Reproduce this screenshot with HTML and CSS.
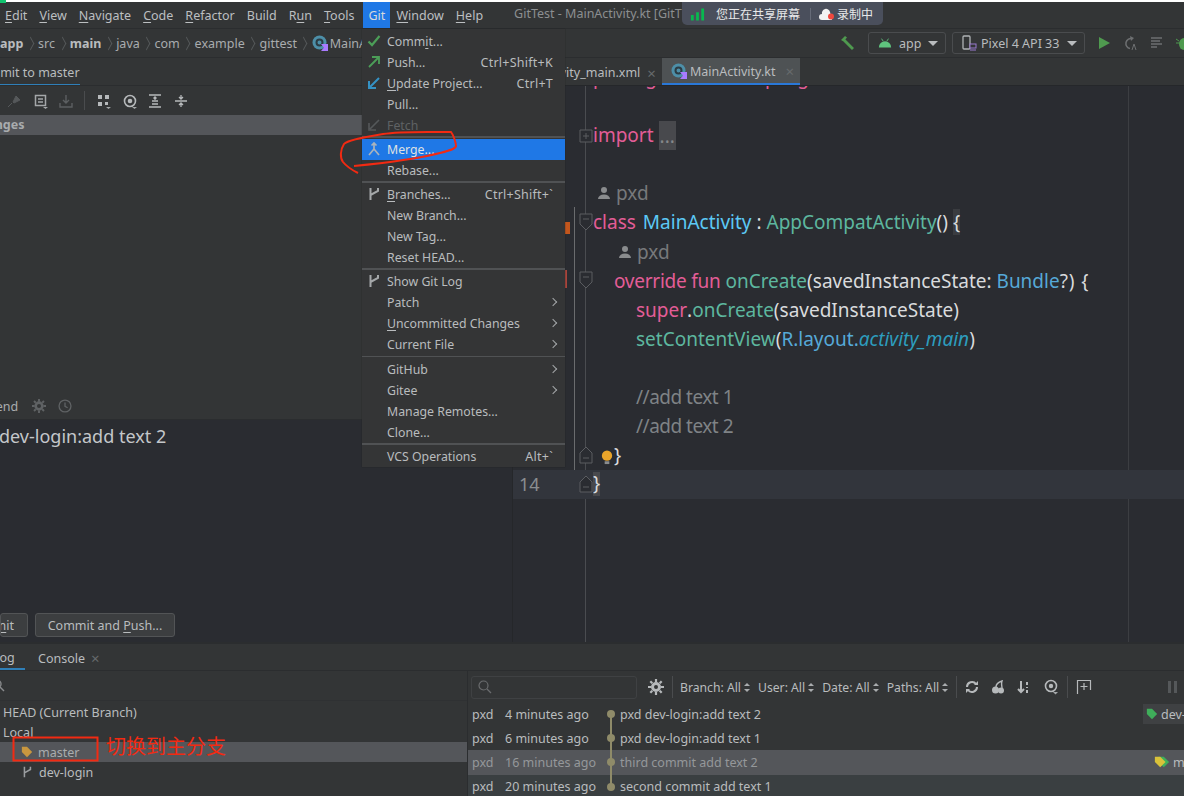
FILE: index.html
```html
<!DOCTYPE html>
<html lang="zh">
<head>
<meta charset="utf-8">
<title>GitTest - MainActivity.kt</title>
<link rel="stylesheet" href="styles.css">
</head>
<body>
<div class="app">
  <div class="topline"><span class="topmark"></span></div>
  <div class="menubar">
    <span class="mi first"><u>E</u>dit</span><span class="mi"><u>V</u>iew</span><span class="mi"><u>N</u>avigate</span><span class="mi"><u>C</u>ode</span><span class="mi"><u>R</u>efactor</span><span class="mi">Build</span><span class="mi">R<u>u</u>n</span><span class="mi"><u>T</u>ools</span><span class="mi git">Git</span><span class="mi"><u>W</u>indow</span><span class="mi"><u>H</u>elp</span>
    <span class="wintitle">GitTest - MainActivity.kt [GitT</span>
  </div>
  <div class="crumbs">
    <div class="crumbtrail">
      <b class="cb">app</b><i class="chev"></i><span class="cb">src</span><i class="chev"></i><b class="cb">main</b><i class="chev"></i><span class="cb">java</span><i class="chev"></i><span class="cb">com</span><i class="chev"></i><span class="cb">example</span><i class="chev"></i><span class="cb">gittest</span><i class="chev"></i>
      <svg class="ic16" viewBox="0 0 16 16"><circle cx="7.5" cy="7.5" r="7" fill="#4d8fa8"/><circle cx="7.5" cy="7.5" r="3" fill="none" stroke="#2c3c44" stroke-width="2"/><path d="M9 9h7v7H9l3-3.500z" fill="#a97bff"/></svg>
      <span class="cb">MainActivity</span>
    </div>
    <div class="runbar">
      <svg class="ic16" viewBox="0 0 16 16"><path d="M1 5 5 1l2 1.500-3.500 4zM5 4l9 9-2 2-9-9z" fill="#4f9a4f"/></svg>
      <div class="combo app-combo">
        <svg class="ic14" viewBox="0 0 16 12"><path d="M1 11a7 7 0 0 1 14 0z" fill="#5fc47e"/><path d="M4 1l2 3M12 1l-2 3" stroke="#5fc47e"/></svg>
        <span>app</span><i class="caret"></i>
      </div>
      <div class="combo pixel-combo">
        <svg class="ic16" viewBox="0 0 16 16"><rect x="2" y="1" width="7" height="13" rx="1" fill="none" stroke="#b0b3b5" stroke-width="1.300"/><rect x="9" y="9" width="6" height="4" fill="#333536" stroke="#9a7bcf"/><path d="M9 15h6" stroke="#9a7bcf"/></svg>
        <span>Pixel 4 API 33</span><i class="caret"></i>
      </div>
      <svg class="ic14 play" viewBox="0 0 14 14"><path d="M2 1l11 6-11 6z" fill="#4f9a4f"/></svg>
      <svg class="ic16" viewBox="0 0 16 16"><path d="M10 3.500a5 5 0 1 0-2 10" fill="none" stroke="#6d6f71" stroke-width="1.500"/><path d="M8 1l4 2-3 3z" fill="#6d6f71"/><path d="M10 15l2-6 2 6" stroke="#6d6f71" fill="none"/></svg>
      <svg class="ic16" viewBox="0 0 16 16"><path d="M2 3h11M2 6h9M2 9h11M2 12h6" stroke="#6d6f71" stroke-width="1.300"/></svg>
      <svg class="ic16" viewBox="0 0 16 16"><ellipse cx="8" cy="9" rx="5" ry="6" fill="#4f9a4f"/><path d="M0 8h16M0 4l3 2M16 4l-3 2" stroke="#4f9a4f"/></svg>
    </div>
  </div>

  <div class="main">
    <section class="left">
      <div class="lefttabs"><span class="lefttab"><span class="cliptab">Commit to master</span></span></div>
      <div class="lefttools">
        <svg class="ic16" viewBox="0 0 16 16"><path d="M1 14l4-4M6 9l3-6 4 4-6 3z" fill="#55585a" stroke="#55585a"/></svg>
        <svg class="ic16" viewBox="0 0 16 16"><path d="M2.500 2.500h10v10h-10zM5 6h5M5 9h5" fill="none" stroke="#a4a7a9" stroke-width="1.500"/><path d="M10 14h5l-2.500 2z" fill="#a4a7a9"/></svg>
        <svg class="ic16" viewBox="0 0 16 16"><path d="M8 2v8M5 7l3 3 3-3M2 10v4h12v-4" fill="none" stroke="#5c5f61" stroke-width="1.400"/></svg>
        <i class="vsep"></i>
        <svg class="ic16" viewBox="0 0 16 16"><path d="M2 2h4v4H2zM9 2h4v4H9zM2 9h4v4H2zM9 9h3v3H9z" fill="#b6b9bb"/><path d="M10 14h5l-2.500 2z" fill="#a4a7a9"/></svg>
        <svg class="ic16" viewBox="0 0 16 16"><circle cx="8" cy="8" r="5.500" fill="none" stroke="#b6b9bb" stroke-width="1.600"/><circle cx="8" cy="8" r="2.300" fill="#b6b9bb"/><path d="M10 14h5l-2.500 2z" fill="#a4a7a9"/></svg>
        <svg class="ic16" viewBox="0 0 16 16"><path d="M2 2h12M2 14h12M5 11h6M5 8h6M8 4v3M6.500 5.500 8 4l1.500 1.500" fill="none" stroke="#b6b9bb" stroke-width="1.300"/></svg>
        <svg class="ic16" viewBox="0 0 16 16"><path d="M2 8h12M8 2v3.500M6 4l2 2 2-2M8 14v-3.500M6 12l2-2 2 2" fill="none" stroke="#b6b9bb" stroke-width="1.300"/></svg>
      </div>
      <div class="section-row"><span class="clip-ch">Changes</span></div>
      <div class="leftfill"></div>
      <div class="amend">
        <span class="clip-am">Amend</span>
        <svg class="ic14" viewBox="0 0 16 16"><circle cx="8" cy="8" r="3.800" fill="none" stroke="#5f6264" stroke-width="3"/><path d="M8 0v3M8 13v3M0 8h3M13 8h3M2.300 2.300l2 2M11.700 11.700l2 2M13.700 2.300l-2 2M4.300 11.700l-2 2" stroke="#5f6264" stroke-width="2.200"/></svg>
        <svg class="ic14" viewBox="0 0 16 16"><circle cx="8" cy="8" r="6.800" fill="none" stroke="#5f6264" stroke-width="1.500"/><path d="M8 4v4.500l3 1.500" fill="none" stroke="#5f6264" stroke-width="1.500"/></svg>
      </div>
      <div class="message">
        <p class="msgtext">dev-login:add text 2</p>
        <div class="btnrow">
          <button class="btn btn-cut"><span class="cutlabel">Com<u>m</u>it</span></button>
          <button class="btn btn-push">Commit and <u>P</u>ush...</button>
        </div>
      </div>
    </section>

    <section class="editor">
      <div class="edtabs">
        <span class="edtab">activity_main.xml<i class="x">×</i></span>
        <span class="edtab active">
          <svg class="ic16" viewBox="0 0 16 16"><circle cx="7.500" cy="7.500" r="7" fill="#4d8fa8"/><circle cx="7.500" cy="7.500" r="3" fill="none" stroke="#2c3c44" stroke-width="2"/><path d="M9 9h7v7H9l3-3.500z" fill="#a97bff"/></svg>
          MainActivity.kt<i class="x">×</i></span>
      </div>
      <div class="code">
        <div class="margin-line"></div>
        <div class="gutter-line g1"></div>
        <div class="gutter-line g2"></div>
        <div class="marker orange"></div>
        <div class="marker red"></div>
        <div class="rows">
        <div class="row"><span class="ln"></span><span class="kw">package com.example.gittest</span></div>
        <div class="row"></div>
        <div class="row"><span class="ln"><svg class="fold plus" viewBox="0 0 14 14"><path d="M1 1h12v12H1zM4 7h6M7 4v6" fill="#2a2c31" stroke="#5a5c60"/></svg></span><span class="kw">import</span> <span class="collapsed">...</span></div>
        <div class="row"></div>
        <div class="row hint"><span class="ln"></span><svg class="person" viewBox="0 0 14 14"><circle cx="7" cy="4" r="3" fill="#8a8c8e"/><path d="M1 13a6 4.500 0 0 1 12 0z" fill="#8a8c8e"/></svg>pxd</div>
        <div class="row"><span class="ln"><svg class="fold" viewBox="0 0 14 18"><path d="M1 1h12v10l-6 6-6-6zM4 6h6" fill="#2a2c31" stroke="#5a5c60"/></svg></span><span class="kw">class</span>&nbsp;<span class="cls">MainActivity</span><span class="pun">&nbsp;:&nbsp;</span><span class="sup">AppCompatActivity</span><span class="pun">()&nbsp;</span><span class="brace">{</span></div>
        <div class="row hint in1"><span class="ln"></span><svg class="person" viewBox="0 0 14 14"><circle cx="7" cy="4" r="3" fill="#8a8c8e"/><path d="M1 13a6 4.500 0 0 1 12 0z" fill="#8a8c8e"/></svg>pxd</div>
        <div class="row"><span class="ln"><svg class="fold" viewBox="0 0 14 18"><path d="M1 1h12v10l-6 6-6-6zM4 6h6" fill="#2a2c31" stroke="#5a5c60"/></svg></span><span class="in1x"></span><span class="kw tight">override fun</span>&nbsp;<span class="fn">onCreate</span><span class="pun">(savedInstanceState:&nbsp;</span><span class="typ">Bundle</span><span class="pun wide">?) {</span></div>
        <div class="row"><span class="ln"></span><span class="in2x"></span><span class="kw">super</span><span class="pun">.</span><span class="fn">onCreate</span><span class="pun">(savedInstanceState)</span></div>
        <div class="row"><span class="ln"></span><span class="in2x"></span><span class="fn">setContentView</span><span class="pun">(</span><span class="typ">R.layout.</span><em class="res">activity_main</em><span class="pun">)</span></div>
        <div class="row"></div>
        <div class="row"><span class="ln"></span><span class="in2x"></span><span class="cmt">//add text 1</span></div>
        <div class="row"><span class="ln"></span><span class="in2x"></span><span class="cmt">//add text 2</span></div>
        <div class="row"><span class="ln"><svg class="fold" viewBox="0 0 14 18"><path d="M1 17h12V7L7 1 1 7zM4 12h6" fill="#2a2c31" stroke="#5a5c60"/></svg></span><span class="in1x"></span><span class="pun">}</span><svg class="bulb" viewBox="0 0 12 16"><circle cx="6" cy="6" r="5.500" fill="#e9a42a"/><path d="M3.500 12h5v3h-5z" fill="#8a8c8e"/></svg></div>
        <div class="row current"><span class="ln">14<svg class="fold" viewBox="0 0 14 18"><path d="M1 17h12V7L7 1 1 7zM4 12h6" fill="#2a2c31" stroke="#5a5c60"/></svg></span><span class="pun closebrace">}</span></div>
        </div>
      </div>
    </section>
  </div>

  <section class="bottom">
    <div class="bottabs"><span class="bt-log"><span class="clip-log">Log</span></span><span class="bt-con">Console<i class="x">×</i></span></div>
    <div class="logbody">
      <div class="tree">
        <div class="treesearch"><svg class="ic14 mag" viewBox="0 0 14 14"><circle cx="5" cy="5" r="4" fill="none" stroke="#8a8c8e" stroke-width="1.400"/><path d="M8 8l4 4" stroke="#8a8c8e" stroke-width="1.400"/></svg></div>
        <div class="tr t-0">HEAD (Current Branch)</div>
        <div class="tr t-0">Local</div>
        <div class="tr t-1 sel"><svg class="ic12" viewBox="0 0 14 14"><path d="M1 1h6l6 6-6 6-6-6z" fill="#c9973f"/></svg>master</div>
        <div class="tr t-1"><svg class="ic12" viewBox="0 0 14 14"><path d="M4 1v12M11 1v3l-7 4" fill="none" stroke="#9a9da0" stroke-width="1.800"/></svg>dev-login</div>
      </div>
      <div class="commits">
        <div class="logtools">
          <div class="logsearch"><svg class="ic14" viewBox="0 0 14 14"><circle cx="5.500" cy="5.500" r="4.500" fill="none" stroke="#6a6c6e" stroke-width="1.200"/><path d="M9 9l4 4" stroke="#6a6c6e" stroke-width="1.200"/></svg></div>
          <svg class="ic16" viewBox="0 0 16 16"><circle cx="8" cy="8" r="3.500" fill="none" stroke="#b6b9bb" stroke-width="3"/><path d="M8 0v3M8 13v3M0 8h3M13 8h3M2.300 2.300l2 2M11.700 11.700l2 2M13.700 2.300l-2 2M4.300 11.700l-2 2" stroke="#b6b9bb" stroke-width="2.200"/></svg>
          <i class="vsep tall"></i>
          <span class="flt">Branch: All<i class="updown"></i></span>
          <span class="flt">User: All<i class="updown"></i></span>
          <span class="flt">Date: All<i class="updown"></i></span>
          <span class="flt">Paths: All<i class="updown"></i></span>
          <i class="vsep tall"></i>
          <svg class="ic14" viewBox="0 0 14 14"><path d="M2 7a5 5 0 0 1 9-3M12 7a5 5 0 0 1-9 3" fill="none" stroke="#b6b9bb" stroke-width="2"/><path d="M9 5h4V1zM5 9H1v4z" fill="#b6b9bb"/></svg>
          <svg class="ic14" viewBox="0 0 14 14"><circle cx="4.500" cy="10" r="3.500" fill="#b6b9bb"/><circle cx="10" cy="10.500" r="3" fill="#b6b9bb"/><path d="M5 7c0-3 3-5 6-6-1 3 0 5 0 7" fill="none" stroke="#b6b9bb" stroke-width="1.400"/></svg>
          <svg class="ic14" viewBox="0 0 14 14"><path d="M4 1v11M1 9l3 3 3-3M10 2v3M10 7v1M10 10v3" fill="none" stroke="#b6b9bb" stroke-width="2"/></svg>
          <svg class="ic16" viewBox="0 0 16 16"><circle cx="8" cy="7" r="5.500" fill="none" stroke="#b6b9bb" stroke-width="1.600"/><circle cx="8" cy="7" r="2.200" fill="#b6b9bb"/><path d="M10 13h5l-2.500 2.500z" fill="#a4a7a9"/></svg>
          <i class="vsep tall"></i>
          <svg class="ic16" viewBox="0 0 16 16"><path d="M1.500 15V1.500h13V11M8 4v7M4.500 7.500h7" fill="none" stroke="#b6b9bb" stroke-width="1.200"/></svg>
          <svg class="ic14 pause" viewBox="0 0 14 14"><path d="M2 1h3v12H2zM8 1h3v12H8z" fill="#55585a"/></svg>
        </div>
        <div class="cm first"><span class="au">pxd</span><span class="tm">4 minutes ago</span><i class="dot"></i><span class="ms">pxd dev-login:add text 2</span><span class="tag tag-dev"><svg class="ic12" viewBox="0 0 14 14"><path d="M1 1h6l6 6-6 6-6-6z" fill="#3fae5a"/></svg>dev-login</span></div>
        <div class="cm"><span class="au">pxd</span><span class="tm">6 minutes ago</span><i class="dot"></i><span class="ms">pxd dev-login:add text 1</span></div>
        <div class="cm hl"><span class="au">pxd</span><span class="tm">16 minutes ago</span><i class="dot"></i><span class="ms">third commit add text 2</span><span class="tag tag-mas"><svg class="ic16" viewBox="0 0 18 14"><path d="M5 1h6l6 6-6 6-6-6z" fill="#3fae5a"/><path d="M1 1h6l6 6-6 6-6-6z" fill="#d9c23a"/></svg>master</span></div>
        <div class="cm tint last"><span class="au">pxd</span><span class="tm">20 minutes ago</span><i class="dot"></i><span class="ms">second commit add text 1</span></div>
      </div>
    </div>
  </section>

  <nav class="gitmenu">
    <div class="it"><svg class="mic" viewBox="0 0 14 14"><path d="M1.500 7.500 5 11l7.500-9" fill="none" stroke="#4c9e58" stroke-width="2.200"/></svg><span>Comm<u>i</u>t...</span></div>
    <div class="it"><svg class="mic" viewBox="0 0 14 14"><path d="M2 12 11 3M5 2h7v7" fill="none" stroke="#4c9e58" stroke-width="1.800"/></svg><span>Push...</span><kbd>Ctrl+Shift+K</kbd></div>
    <div class="it"><svg class="mic" viewBox="0 0 14 14"><path d="M12 2 3 11M2 5v7h7" fill="none" stroke="#3592c4" stroke-width="2"/></svg><span><u>U</u>pdate Project...</span><kbd>Ctrl+T</kbd></div>
    <div class="it"><i class="mic"></i><span>Pull...</span></div>
    <div class="it off"><svg class="mic" viewBox="0 0 14 14"><path d="M12 2 3 11M2 5v7h7" fill="none" stroke="#55585a" stroke-width="1.600"/></svg><span>Fetch</span></div>
    <div class="msep"></div>
    <div class="it on"><svg class="mic" viewBox="0 0 14 14"><path d="M7 1v6L2 13M7 7l5 6M4.500 3.500 7 1l2.500 2.500" fill="none" stroke="#a9b3bd" stroke-width="1.700"/></svg><span>Merge...</span></div>
    <div class="it"><i class="mic"></i><span>Rebase...</span></div>
    <div class="msep"></div>
    <div class="it"><svg class="mic" viewBox="0 0 14 14"><path d="M3.500 1v12M11 1v3l-7.500 4" fill="none" stroke="#a4a7a9" stroke-width="2"/></svg><span><u>B</u>ranches...</span><kbd>Ctrl+Shift+`</kbd></div>
    <div class="it"><i class="mic"></i><span>New Branch...</span></div>
    <div class="it"><i class="mic"></i><span>New Tag...</span></div>
    <div class="it"><i class="mic"></i><span>Reset HEAD...</span></div>
    <div class="msep"></div>
    <div class="it"><svg class="mic" viewBox="0 0 14 14"><path d="M3.500 1v12M11 1v3l-7.500 4" fill="none" stroke="#a4a7a9" stroke-width="2"/></svg><span>Show Git Log</span></div>
    <div class="it"><i class="mic"></i><span>Patch</span><i class="sub"></i></div>
    <div class="it"><i class="mic"></i><span><u>U</u>ncommitted Changes</span><i class="sub"></i></div>
    <div class="it"><i class="mic"></i><span>Current File</span><i class="sub"></i></div>
    <div class="msep wide"></div>
    <div class="it"><i class="mic"></i><span>GitHub</span><i class="sub"></i></div>
    <div class="it"><i class="mic"></i><span>Gitee</span><i class="sub"></i></div>
    <div class="it"><i class="mic"></i><span>Manage Remotes...</span></div>
    <div class="it"><i class="mic"></i><span>Clone...</span></div>
    <div class="msep"></div>
    <div class="it"><i class="mic"></i><span>VCS Operations</span><kbd>Alt+`</kbd></div>
  </nav>

  <div class="sharepill">
    <svg class="bars" viewBox="0 0 16 14"><path d="M1 8h3v6H1zM6.500 5h3v9h-3zM12 1h3v13h-3z" fill="#08b84f"/></svg>
    <span>您正在共享屏幕</span><i class="pillsep"></i>
    <svg class="cloud" viewBox="0 0 16 14"><path d="M3 13a3 3 0 0 1 0-6 4 4 0 0 1 8-2l2 8z" fill="#f2f2f2"/><circle cx="12" cy="9.500" r="3" fill="#f0483e"/></svg>
    <span>录制中</span>
  </div>

  <svg class="ink" viewBox="0 0 1184 796">
    <path d="M354 166C385 163 420 158 440 153 452 150 457 148 456 145 455 140 454 136 451 132 430 132 400 131 383 134 365 137 347 140 344 144 340 150 340 158 343 162 347 167 352 170 358 173" fill="none" stroke="#f22a12" stroke-width="2"/>
    <rect x="13.500" y="737.500" width="84" height="23" fill="none" stroke="#f22a12" stroke-width="2"/>
  </svg>
  <span class="note">切换到主分支</span>
</div>
</body>
</html>
```

FILE: styles.css
```css
* { box-sizing: border-box; }
html, body { margin: 0; padding: 0; }
body { background: #333536; }
.app {
  position: relative;
  width: 1184px;
  height: 796px;
  overflow: hidden;
  display: flex;
  flex-direction: column;
  background: #333536;
  color: #b9bcbe;
  font-family: "Noto Sans", "Noto Sans CJK SC", sans-serif;
  font-size: 12.5px;
}
svg { display: block; flex: none; }
i { font-style: normal; }
u { text-underline-offset: 2px; }
.ic12 { width: 12px; height: 12px; }
.ic14 { width: 14px; height: 14px; }
.ic16 { width: 16px; height: 16px; }

.topline { height: 2px; background: #fff; flex: none; }
.topmark { display: block; width: 6px; height: 3px; background: #12c46f; }

.menubar {
  height: 27px; flex: none; display: flex; align-items: center;
  border-bottom: 1px solid #2b2d2f; padding-left: 5px; position: relative;
}
.mi { margin-right: 12px; white-space: nowrap; color: #bcbfc1; }
.mi.git {
  background: #1f78e6; color: #d8dadc; align-self: stretch;
  width: 27px; margin: 0 6px 0 -3px; display: flex; align-items: center; justify-content: center;
}
.wintitle { margin-left: 19px; color: #8c8f91; white-space: nowrap; margin-top: -3px; }

.crumbs {
  height: 29px; flex: none; display: flex; align-items: center; justify-content: space-between;
  border-bottom: 1px solid #2b2d2f;
}
.crumbtrail { display: flex; align-items: center; white-space: nowrap; width: 362px; overflow: hidden; }
.cb { color: #a9acae; font-weight: 400; }
b.cb { font-weight: 700; color: #b9bcbe; }
.crumbtrail .ic16 { margin-right: 2px; }
.chev { width: 7px; height: 7px; margin: 0 4.300px 0 3.500px; flex: none; border-top: 1px solid #55585a; border-right: 1px solid #55585a; transform: scaleX(.55) rotate(45deg) scale(1.4); }
.runbar { display: flex; align-items: center; gap: 11px; margin-right: -8px; }
.combo {
  height: 22px; display: flex; align-items: center; gap: 7px; padding: 0 8px;
  border: 1px solid #4a4c4e; border-radius: 3px; color: #b9bcbe; white-space: nowrap;
}
.app-combo { width: 78px; margin-left: 1px; padding-left: 9px; }
.pixel-combo { width: 133px; margin-left: -5px; gap: 4px; }
.pixel-combo .caret { margin-left: 4px; }
.caret { width: 0; height: 0; border-left: 5px solid transparent; border-right: 5px solid transparent; border-top: 5px solid #b9bcbe; margin-left: auto; }
.play { margin-left: 1px; }

.main { flex: 1; display: flex; min-height: 0; border-bottom: 2px solid #2b2d2f; }

.left { width: 513px; flex: none; display: flex; flex-direction: column; border-right: 1px solid #25272a; }
.lefttabs { height: 28px; flex: none; border-bottom: 1px solid #2b2d2f; overflow: hidden; }
.lefttab { display: block; width: 80px; height: 28px; border-bottom: 2px solid #2f7fb8; overflow: hidden; line-height: 29px; white-space: nowrap; }
.cliptab { display: block; margin-left: -27px; color: #b9bcbe; }
.lefttools { height: 29px; flex: none; display: flex; align-items: center; gap: 9.500px; padding-left: 7px; }
.lefttools .vsep { margin-right: 2px; }
.vsep { width: 1px; height: 19px; background: #4a4c4e; flex: none; }
.section-row { height: 20px; flex: none; background: #54565a; overflow: hidden; line-height: 20px; white-space: nowrap; }
.clip-ch { display: block; margin-left: -29px; font-weight: 700; color: #a9acae; }
.leftfill { flex: 1; }
.amend { height: 27px; flex: none; display: flex; align-items: center; gap: 9px; overflow: hidden; white-space: nowrap; border-bottom: 1px solid #2b2d2f; }
.clip-am { margin-left: -24px; color: #a9acae; margin-right: 5px; }
.amend .ic14 + .ic14 { margin-left: 3px; }
.message { height: 222px; flex: none; background: #2a2c31; display: flex; flex-direction: column; overflow: hidden; }
.msgtext { margin: 3px 0 0 -1px; font-size: 18px; line-height: 26px; color: #c4c7ca; white-space: nowrap; flex: 1; }
.btnrow { display: flex; gap: 7px; height: 29px; flex: none; overflow: hidden; }
.btn {
  height: 24px; font: inherit; color: #b9bcbe; background: #3c3e40;
  border: 1px solid #525456; border-radius: 3px; padding: 0;
}
.btn-cut { width: 28px; overflow: hidden; display: flex; justify-content: flex-end; align-items: center; padding-right: 13px; white-space: nowrap; }
.cutlabel { flex: none; }
.btn-push { width: 140px; }

.editor { flex: 1; min-width: 0; display: flex; flex-direction: column; background: #2a2c31; }
.edtabs { height: 28px; flex: none; display: flex; align-items: stretch; background: #333536; padding-left: 26px; border-bottom: 1px solid #25272a; }
.edtab { display: flex; align-items: center; white-space: nowrap; color: #b9bcbe; padding: 2px 6px 0 0; }
.edtab .x { color: #666a6c; margin-left: 7px; font-size: 15px; }
.edtab.active { background: #4e5254; border-bottom: 2px solid #2a78d8; padding: 1px 5px 0 9px; gap: 3px; width: 138px; }

.code { position: relative; flex: 1; overflow: hidden; font-family: "Noto Sans", sans-serif; font-size: 19px; color: #d9dbdd; }
.rows { margin-top: -23.5px; }
.row { height: 29.08px; display: flex; align-items: center; white-space: nowrap; position: relative; }
.ln { width: 80px; flex: none; position: relative; color: #8a8d90; padding-left: 6px; align-self: stretch; display: flex; align-items: center; font-size: 18px; }
.fold { position: absolute; left: 66px; top: 5px; width: 14px; height: 18px; }
.fold.plus { height: 14px; top: 8px; }
.kw { color: #e35d97; }
.kw.tight { letter-spacing: -.25px; }
.cls { color: #5cc9f5; margin-left: 2px; }
.sup, .fn { color: #5db79f; }
.typ { color: #56a9d8; }
.res { color: #2d9dbe; }
.pun { color: #d9dbdd; }
.pun.wide { letter-spacing: .9px; }
.cmt { color: #7f8386; letter-spacing: -.5px; }
.brace { background: #3a3c40; }
.collapsed { background: #48494d; color: #85888a; padding: 0 1px; margin-left: 5px; height: 29px; line-height: 30px; }
.hint { color: #77797b; }
.hint .person { width: 14px; height: 14px; margin-right: 5px; margin-left: 4px; }
.hint.in1 .person { margin-left: 25px; }
.in1x { width: 21px; flex: none; }
.in2x { width: 43px; flex: none; }
.bulb { width: 12px; height: 15px; position: absolute; left: 88px; top: 9px; }
.current { background: #32353c; }
.closebrace { background: #48494d; height: 24px; line-height: 22px; }
.margin-line { position: absolute; left: 615px; top: 0; bottom: 0; width: 1px; background: #3c3e42; }
.gutter-line { position: absolute; width: 1px; background: #4a4c50; }
.g1 { left: 72px; top: 0; bottom: 0; }
.g2 { left: 61px; top: 121px; height: 290px; background: #6a6c6e; }
.marker { position: absolute; left: 52px; width: 5px; }
.marker.orange { top: 136px; height: 12px; background: #c2561d; }
.marker.red { top: 184px; height: 18px; width: 2px; background: #a8453c; }

.bottom { height: 152px; flex: none; display: flex; flex-direction: column; }
.bottabs { height: 27px; flex: none; display: flex; align-items: stretch; border-bottom: 1px solid #2b2d2f; }
.bt-log { width: 25px; border-bottom: 2px solid #2f7fb8; overflow: hidden; white-space: nowrap; line-height: 28px; }
.clip-log { display: block; margin-left: -7px; }
.bt-con { margin-left: 13px; display: flex; align-items: center; padding-top: 2px; }
.bt-con .x { color: #666a6c; margin-left: 6px; font-size: 15px; }
.logbody { flex: 1; display: flex; min-height: 0; }
.tree { width: 468px; flex: none; border-right: 1px solid #2b2d2f; }
.treesearch { height: 30px; border-bottom: 1px solid #2f3133; display: flex; align-items: center; }
.mag { margin-left: -8px; }
.tr { height: 20px; display: flex; align-items: center; gap: 6px; white-space: nowrap; }
.t-0 { padding-left: 3px; }
.t-0:nth-child(2) { margin-top: 1px; }
.t-1 { padding-left: 21px; }
.tr.sel { background: #54565a; color: #a9acae; gap: 5px; }
.commits { flex: 1; min-width: 0; }
.logtools { height: 30px; display: flex; align-items: center; padding: 2px 0 0 3px; gap: 8px; }
.logtools .ic14 { margin-right: 4px; }
.logsearch { width: 166px; height: 23px; border: 1px solid #3f4143; border-radius: 3px; display: flex; align-items: center; padding-left: 6px; margin-right: 3px; }
.vsep.tall { height: 22px; }
.flt { display: flex; align-items: center; white-space: nowrap; gap: 3px; font-size: 12.2px; }
.flt:first-of-type { margin-left: -1px; }
.updown { width: 6px; height: 9px; display: block; position: relative; }
.updown::before, .updown::after { content: ""; position: absolute; left: 0; width: 0; height: 0; border-left: 3px solid transparent; border-right: 3px solid transparent; }
.updown::before { top: 0; border-bottom: 3px solid #a9acae; }
.updown::after { bottom: 0; border-top: 3px solid #a9acae; }
.logtools .pause { margin-left: auto; margin-right: 4px; }
.cm { height: 24.2px; display: flex; align-items: center; padding-left: 4px; white-space: nowrap; position: relative; overflow: hidden; color: #b9bcbe; }
.cm.first { margin-top: 1px; }
.cm.hl { background: #54565a; color: #95989a; }
.cm.tint { background: #3a3f41; }
.au { width: 33px; flex: none; }
.tm { width: 102px; flex: none; }
.dot { width: 8px; height: 8px; border-radius: 50%; background: #8f8b69; margin-right: 5px; flex: none; position: relative; }
.cm::before { content: ""; position: absolute; left: 142px; top: 0; bottom: 0; width: 2px; background: #8f8b69; }
.cm.first::before { top: 12px; }
.cm.last::before { bottom: 12px; }
.tag { position: absolute; display: flex; align-items: center; gap: 3px; top: 2px; height: 20px; color: #b9bcbe; }
.tag-dev { left: 675px; background: #3f4143; padding: 0 3px; width: 60px; }
.tag-mas { left: 686px; }

.gitmenu {
  position: absolute; left: 362px; top: 29px; width: 203px; height: 438px; padding-top: 1.5px;
  background: #343536; box-shadow: 0 0 1px #222; font-size: 12.3px;
}
.it { height: 21px; display: flex; align-items: center; color: #b9bcbe; white-space: nowrap; position: relative; }
.mic { width: 14px; height: 14px; margin: 0 6px 0 5px; flex: none; display: block; }
.it kbd { font: inherit; font-size: 12.5px; letter-spacing: .25px; margin-left: auto; margin-right: 12px; }
.it.off { color: #5f6264; }
.it.on { background: #1f78e6; color: #dfe1e3; }
.sub { margin-left: auto; margin-right: 9px; width: 6px; height: 6px; border-top: 1.3px solid #a4a7a9; border-right: 1.3px solid #a4a7a9; transform: rotate(45deg); }
.msep { height: 3px; display: flex; align-items: center; }
.msep::before { content: ""; display: block; width: 100%; height: 1.5px; background: #505254; }
.msep.wide { height: 4px; }

.sharepill {
  position: absolute; left: 682px; top: 2px; width: 201px; height: 23px;
  background: #4a4f5c; border-radius: 0 0 5px 5px; display: flex; align-items: center; color: #e8e9ea; font-family: "Noto Sans CJK SC", sans-serif; font-size: 12px; padding-left: 8px;
}
.bars { width: 15px; height: 14px; margin-right: 11px; }
.pillsep { width: 1px; height: 12px; background: #666b78; margin: 0 8px 0 10px; }
.cloud { width: 16px; height: 14px; margin-right: 2px; }
.ink { position: absolute; left: 0; top: 0; width: 1184px; height: 796px; pointer-events: none; }
.note { position: absolute; left: 106px; top: 732px; color: #f22a12; font-family: "Noto Sans CJK SC", sans-serif; font-size: 20px; line-height: 28px; white-space: nowrap; }
```
